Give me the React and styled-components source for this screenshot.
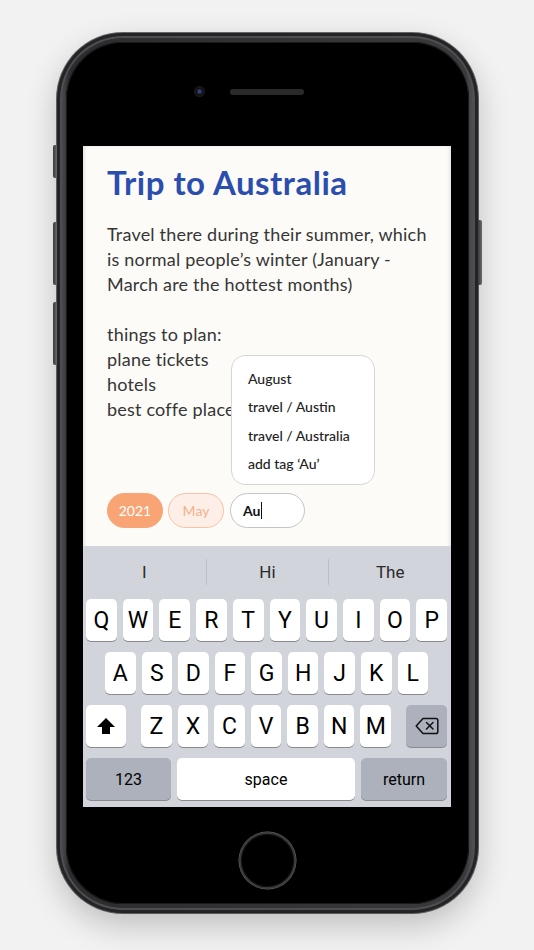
import styled, { createGlobalStyle } from "styled-components";

const GlobalStyle = createGlobalStyle`
  body {
    margin: 0;
    background: #f2f2f2;
  }
`;

const ROWS = ["QWERTYUIOP", "ASDFGHJKL", "ZXCVBNM"];
const SUGGESTIONS = ["I", "Hi", "The"];
const MENU = ["August", "travel / Austin", "travel / Australia", "add tag ‘Au’"];
const PLAN = ["things to plan:", "plane tickets", "hotels", "best coffe place"];

function ShiftIcon() {
  return (
    <svg width="20" height="18" viewBox="0 0 20 18">
      <path d="M10 1 L19 10 L14 10 L14 17 L6 17 L6 10 L1 10 Z" fill="#000" />
    </svg>
  );
}

function DeleteIcon() {
  return (
    <svg width="24" height="18" viewBox="0 0 24 18">
      <path
        d="M8 1.5 H21 a1.8 1.8 0 0 1 1.8 1.8 V14.7 a1.8 1.8 0 0 1 -1.8 1.8 H8 L1.2 9 Z"
        fill="none"
        stroke="#111"
        strokeWidth="1.5"
        strokeLinejoin="round"
      />
      <path d="M11.5 5.5 L18 12 M18 5.5 L11.5 12" stroke="#111" strokeWidth="1.5" strokeLinecap="round" />
    </svg>
  );
}

export default function App() {
  return (
    <>
      <GlobalStyle />
      <Page>
        <Phone>
          <SideButton side="left" top={112} h={33} />
          <SideButton side="left" top={189} h={63} />
          <SideButton side="left" top={269} h={63} />
          <SideButton side="right" top={187} h={65} />
          <Face>
            <TopBezel>
              <Camera />
              <Speaker />
              <CameraSpacer />
            </TopBezel>
            <Screen>
              <Note>
                <Title>Trip to Australia</Title>
                <Paragraph>
                  Travel there during their summer, which is normal people’s winter (January - March are the hottest
                  months)
                </Paragraph>
                <PlanList>
                  {PLAN.map((line) => (
                    <PlanLine key={line}>{line}</PlanLine>
                  ))}
                </PlanList>
                <Tags>
                  <Pill variant="filled">2021</Pill>
                  <Pill variant="soft">May</Pill>
                  <TagInput>
                    Au<Caret />
                    <Menu>
                      {MENU.map((item) => (
                        <MenuItem key={item}>{item}</MenuItem>
                      ))}
                    </Menu>
                  </TagInput>
                </Tags>
              </Note>
              <Keyboard>
                <Suggestions>
                  {SUGGESTIONS.map((s, i) => (
                    <Suggestion key={s} divider={i > 0}>
                      {s}
                    </Suggestion>
                  ))}
                </Suggestions>
                <KeyRow>
                  {ROWS[0].split("").map((k) => (
                    <Key key={k}>{k}</Key>
                  ))}
                </KeyRow>
                <KeyRow inset={19}>
                  {ROWS[1].split("").map((k) => (
                    <Key key={k}>{k}</Key>
                  ))}
                </KeyRow>
                <KeyRow>
                  <Key width={40}>
                    <ShiftIcon />
                  </Key>
                  <LetterGroup>
                    {ROWS[2].split("").map((k) => (
                      <Key key={k}>{k}</Key>
                    ))}
                  </LetterGroup>
                  <Key width={41} dark>
                    <DeleteIcon />
                  </Key>
                </KeyRow>
                <KeyRow>
                  <Key width={85} dark small>
                    123
                  </Key>
                  <Key small>space</Key>
                  <Key width={86} dark small>
                    return
                  </Key>
                </KeyRow>
              </Keyboard>
            </Screen>
            <BottomBezel>
              <HomeButton />
            </BottomBezel>
          </Face>
        </Phone>
      </Page>
    </>
  );
}

const Page = styled.div`
  height: 950px;
  display: flex;
  justify-content: center;
  align-items: flex-start;
  padding-top: 33px;
  box-sizing: border-box;
  overflow: hidden;
`;

const Phone = styled.div`
  position: relative;
  width: 421px;
  height: 880px;
  box-sizing: border-box;
  padding: 9px;
  border-radius: 66px;
  background: linear-gradient(90deg, #5c5c60 0%, #2c2c2e 3%, #3a3a3d 97%, #5c5c60 100%);
  box-shadow: 0 12px 32px rgba(0, 0, 0, 0.22), 0 0 0 1px #6a6a6e,
    inset 0 0 0 3px #242426, inset 0 0 0 5px #4e4e52;
`;

const SideButton = styled.div`
  position: absolute;
  top: ${(p) => p.top}px;
  ${(p) => (p.side === "left" ? "left: -4px;" : "right: -4px;")}
  width: 4px;
  height: ${(p) => p.h}px;
  border-radius: ${(p) => (p.side === "left" ? "2px 0 0 2px" : "0 2px 2px 0")};
  background: linear-gradient(90deg, #3a3a3c, #6a6a6e);
`;

const Face = styled.div`
  height: 100%;
  border-radius: 57px;
  background: #000;
  display: flex;
  flex-direction: column;
  align-items: center;
  box-shadow: inset 0 0 0 1px #1a1a1a;
`;

const TopBezel = styled.div`
  height: 104px;
  width: 100%;
  display: flex;
  justify-content: center;
  align-items: flex-start;
  gap: 26px;
  padding-top: 45px;
  box-sizing: border-box;
`;

const Camera = styled.div`
  width: 9px;
  height: 9px;
  border-radius: 50%;
  background: radial-gradient(circle at 50% 50%, #2b3f78 0 25%, #101014 45%, #222 100%);
  box-shadow: 0 0 0 1px #1c1c1c;
`;

const CameraSpacer = styled.div`
  width: 9px;
`;

const Speaker = styled.div`
  width: 74px;
  height: 6px;
  margin-top: 1.5px;
  border-radius: 3px;
  background: #2a2a2c;
`;

const Screen = styled.div`
  width: 368px;
  height: 661px;
  display: flex;
  flex-direction: column;
  background: #fcfbf8;
  overflow: hidden;
  box-shadow: inset 3px 0 5px -3px rgba(0, 0, 0, 0.18), inset -3px 0 5px -3px rgba(0, 0, 0, 0.18);
`;

const Note = styled.div`
  flex: 1;
  display: flex;
  flex-direction: column;
  padding: 16px 24px 18px;
  font-family: Lato, "Noto Sans", sans-serif;
`;

const Title = styled.h1`
  margin: 0 0 20px;
  font-size: 33px;
  line-height: 40px;
  font-weight: 700;
  letter-spacing: 0.5px;
  color: #2b4eae;
`;

const Paragraph = styled.p`
  margin: 0 0 25px;
  font-size: 18px;
  line-height: 25px;
  letter-spacing: 0.2px;
  color: #363636;
`;

const PlanList = styled.div`
  display: flex;
  flex-direction: column;
  align-items: flex-start;
`;

const PlanLine = styled.div`
  font-size: 18px;
  line-height: 25px;
  letter-spacing: 0.2px;
  color: #363636;
`;

const Tags = styled.div`
  margin-top: auto;
  display: flex;
  gap: 5px;
  align-items: center;
`;

const Pill = styled.div`
  width: 56px;
  height: 35px;
  box-sizing: border-box;
  border-radius: 18px;
  display: flex;
  align-items: center;
  justify-content: center;
  font-size: 14px;
  ${(p) =>
    p.variant === "filled"
      ? "background: #f9a474; color: #fff; border: 1px solid #f9a474;"
      : "background: #fdefe7; color: #f7b08c; border: 1px solid #f9c2a2;"}
`;

const TagInput = styled.div`
  position: relative;
  height: 35px;
  width: 75px;
  margin-left: 1px;
  box-sizing: border-box;
  padding: 0 12px;
  border-radius: 18px;
  border: 1px solid #c4c4c4;
  background: #fff;
  display: flex;
  align-items: center;
  font-size: 14px;
  font-weight: 700;
  color: #111;
`;

const Caret = styled.span`
  display: inline-block;
  width: 1px;
  height: 17px;
  margin-left: 1px;
  background: #111;
`;

const Menu = styled.div`
  position: absolute;
  left: 0;
  bottom: calc(100% + 9px);
  width: 144px;
  box-sizing: border-box;
  padding: 8px 0 6px 16px;
  border: 1px solid #d6d6d6;
  border-radius: 14px;
  background: #fff;
`;

const MenuItem = styled.div`
  height: 28.5px;
  display: flex;
  align-items: center;
  font-size: 14px;
  font-weight: 500;
  color: #222;
  white-space: nowrap;
`;

const Keyboard = styled.div`
  height: 261px;
  box-sizing: border-box;
  padding: 0 4px 7px 3px;
  background: #d1d4da;
  display: flex;
  flex-direction: column;
  gap: 11px;
  font-family: Roboto, "Liberation Sans", sans-serif;
`;

const Suggestions = styled.div`
  height: 52px;
  margin: 0 -4px -10px -3px;
  display: grid;
  grid-template-columns: repeat(3, 1fr);
  align-items: center;
`;

const Suggestion = styled.div`
  height: 26px;
  display: flex;
  align-items: center;
  justify-content: center;
  font-size: 17px;
  color: #2a2a2a;
  border-left: ${(p) => (p.divider ? "1px solid #bcc0c6" : "none")};
`;

const KeyRow = styled.div`
  height: 42px;
  display: flex;
  gap: 6px;
  padding: 0 ${(p) => p.inset || 0}px;
`;

const LetterGroup = styled.div`
  flex: 1;
  display: flex;
  gap: 6px;
  margin: 0 9px;
`;

const Key = styled.div`
  flex: ${(p) => (p.width ? `0 0 ${p.width}px` : "1 1 0")};
  display: flex;
  align-items: center;
  justify-content: center;
  border-radius: 5px;
  background: ${(p) => (p.dark ? "#acb1bb" : "#fff")};
  box-shadow: 0 1px 0 #898a8e;
  font-size: ${(p) => (p.small ? "16px" : "23px")};
  color: #000;
`;

const BottomBezel = styled.div`
  flex: 1;
  display: flex;
  justify-content: center;
  padding-top: 25px;
`;

const HomeButton = styled.div`
  width: 53px;
  height: 53px;
  border-radius: 50%;
  border: 2px solid #3a3a3c;
  box-shadow: inset 0 0 0 1px #111, 0 0 0 0.5px #666;
  background: #000;
`;
